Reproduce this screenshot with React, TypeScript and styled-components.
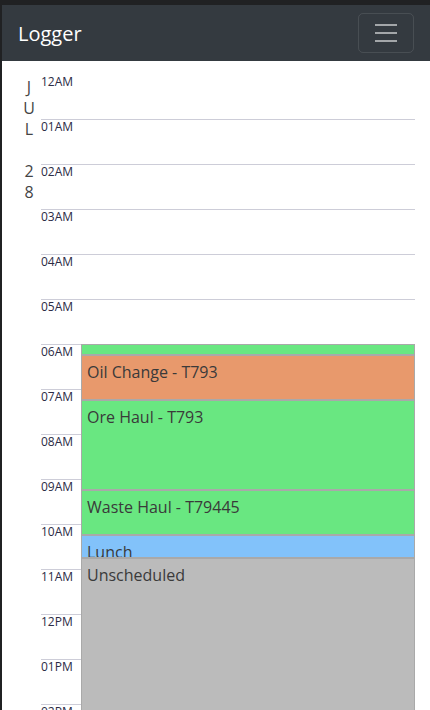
import React from "react";
import styled, { createGlobalStyle } from "styled-components";

const HOUR = 45;

const GlobalStyle = createGlobalStyle`
  html, body {
    margin: 0;
    padding: 0;
    overflow: hidden;
    font-family: "Open Sans", "Noto Sans", "Liberation Sans", sans-serif;
  }
  * { box-sizing: border-box; }
`;

const Frame = styled.div`
  height: 100vh;
  overflow: hidden;
  background: #202123;
  padding: 5px 0 0 2px;
`;

const Page = styled.div`
  height: 100%;
  background: #fff;
  overflow: hidden;
`;

const Navbar = styled.nav`
  height: 56px;
  background: #343a40;
  display: flex;
  align-items: center;
  justify-content: space-between;
  padding: 8px 16px;
`;

const Brand = styled.span`
  color: #fff;
  font-size: 20px;
  line-height: 30px;
  margin-top: 1px;
`;

const Toggler = styled.button`
  width: 56px;
  height: 40px;
  padding: 4px 12px;
  background: transparent;
  border: 1px solid rgba(255, 255, 255, 0.1);
  border-radius: 5px;
  display: flex;
  align-items: center;
  justify-content: center;
`;

const Main = styled.div`
  display: flex;
  align-items: flex-start;
`;

const DateColumn = styled.div`
  width: 39px;
  padding: 16px 0 0 15px;
  display: flex;
  flex-direction: column;
`;

const DateChar = styled.span`
  width: 24px;
  text-align: center;
  font-size: 16px;
  line-height: 21px;
  color: #444;
`;

const Timeline = styled.div`
  flex: 1;
  margin-right: 15px;
  padding-top: 13px;
`;

const Hours = styled.div`
  position: relative;
`;

const HourRow = styled.div<{ $first?: boolean }>`
  height: ${HOUR}px;
  border-top: ${(p) => (p.$first ? "none" : "1px solid #cdcdd8")};
  font-size: 12px;
  line-height: 12px;
  padding-top: ${(p) => (p.$first ? "1px" : "0")};
  color: #2b2b45;
`;

const HourLabel = styled.span`
  display: inline-block;
  margin-top: 1px;
`;

const EventLayer = styled.div`
  position: absolute;
  left: 40px;
  right: 0;
  display: flex;
  flex-direction: column;
`;

const EventBox = styled.div<{ $bg: string }>`
  background: ${(p) => p.$bg};
  border: 1px solid #a9a9a9;
  overflow: hidden;
  padding: 4px 5px 0;
  font-size: 16px;
  line-height: 24px;
  color: #3a3a3a;
  white-space: nowrap;
`;

const hours = [
  "12AM", "01AM", "02AM", "03AM", "04AM", "05AM", "06AM", "07AM", "08AM",
  "09AM", "10AM", "11AM", "12PM", "01PM", "02PM", "03PM",
];

type Ev = { title: string; start: number; end: number; color: string };

const GREEN = "#69e781";
const events: Ev[] = [
  { title: "", start: 6, end: 6.25, color: GREEN },
  { title: "Oil Change - T793", start: 6.25, end: 7.25, color: "#e8996c" },
  { title: "Ore Haul - T793", start: 7.25, end: 9.25, color: GREEN },
  { title: "Waste Haul - T79445", start: 9.25, end: 10.25, color: GREEN },
  { title: "Lunch", start: 10.25, end: 10.75, color: "#82c2fa" },
  { title: "Unscheduled", start: 10.75, end: 16, color: "#bbbbbb" },
];

const dateChars = "JUL 28".split("");

export default function App() {
  const first = events[0].start;
  return (
    <>
      <GlobalStyle />
      <Frame>
        <Page>
          <Navbar>
            <Brand>Logger</Brand>
            <Toggler aria-label="Toggle navigation">
              <svg width="30" height="30" viewBox="0 0 30 30">
                <path
                  d="M4 7h22M4 15h22M4 23h22"
                  stroke="rgba(255,255,255,0.55)"
                  strokeWidth="2"
                  strokeLinecap="butt"
                />
              </svg>
            </Toggler>
          </Navbar>
          <Main>
            <DateColumn>
              {dateChars.map((c, i) => (
                <DateChar key={i}>{c === " " ? "\u00a0" : c}</DateChar>
              ))}
            </DateColumn>
            <Timeline>
              <Hours>
                {hours.map((h, i) => (
                  <HourRow key={h} $first={i === 0}>
                    <HourLabel>{h}</HourLabel>
                  </HourRow>
                ))}
                <EventLayer style={{ top: first * HOUR }}>
                  {events.map((e, i) => (
                    <EventBox
                      key={i}
                      $bg={e.color}
                      style={{ height: (e.end - e.start) * HOUR }}
                    >
                      {e.title}
                    </EventBox>
                  ))}
                </EventLayer>
              </Hours>
            </Timeline>
          </Main>
        </Page>
      </Frame>
    </>
  );
}
